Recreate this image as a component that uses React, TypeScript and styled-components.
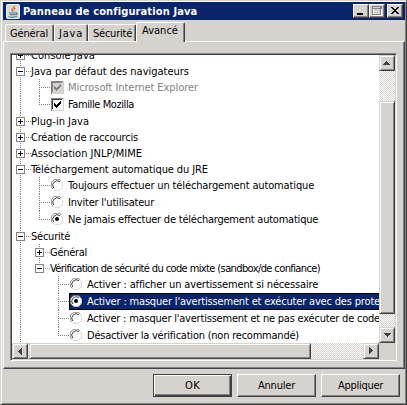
import React, { useLayoutEffect, useRef, useState } from "react";
import styled, { createGlobalStyle, css } from "styled-components";

const face = "#d6d3ce";
const shade = "#848284";
const dark = "#424142";
const navy = "#08246b";

const GlobalStyle = createGlobalStyle`
  * { box-sizing: border-box; }
  body {
    margin: 0;
    background: ${face};
    font-family: "DejaVu Sans Condensed", "DejaVu Sans", sans-serif;
    font-stretch: condensed;
    font-size: 11px;
    line-height: 16px;
    color: #000;
    overflow: hidden;
  }
`;

const raised = css`
  background: ${face};
  border: 1px solid;
  border-color: ${face} ${dark} ${dark} ${face};
  box-shadow: inset 1px 1px #fff, inset -1px -1px ${shade};
`;

const Window = styled.div`
  width: 407px;
  height: 405px;
  display: flex;
  flex-direction: column;
  background: ${face};
  padding: 0 1px 0 2px;
  border: 1px solid;
  border-color: ${face} ${dark} ${dark} ${face};
  box-shadow: inset 1px 1px #fff, inset -1px -1px ${shade};
`;

const TitleBar = styled.header`
  height: 18px;
  margin-top: 1px;
  flex: none;
  display: flex;
  align-items: center;
  padding: 0 2px 0 3px;
  background: ${navy};
  color: #fff;
  font-weight: bold;
`;

const TitleText = styled.div`
  flex: 1;
  padding: 1px 0 0 3px;
`;

const CaptionButton = styled.button<{ $gap?: boolean }>`
  ${raised}
  border-color: #fff ${dark} ${dark} #fff;
  box-shadow: inset -1px -1px ${shade};
  width: 16px;
  height: 14px;
  padding: 0;
  margin-left: ${(p) => (p.$gap ? 2 : 0)}px;
  display: flex;
  svg { display: block; }
`;

const Tabs = styled.nav`
  height: 21px;
  padding-left: 2px;
  flex: none;
  display: flex;
  align-items: flex-end;
`;

const Tab = styled.div<{ $w: number; $active?: boolean }>`
  width: ${(p) => p.$w}px;
  height: ${(p) => (p.$active ? 20 : 17)}px;
  margin-bottom: ${(p) => (p.$active ? -1 : 0)}px;
  padding: ${(p) => (p.$active ? "0 0 0 5px" : "1px 0 0 4px")};
  border: 1px solid #fff;
  border-right-color: ${dark};
  border-bottom: 0;
  border-radius: 2px 2px 0 0;
  box-shadow: inset -1px 0 ${shade};
  background: ${face};
  position: relative;
  z-index: ${(p) => (p.$active ? 1 : 0)};
`;

const Pane = styled.main`
  height: 328px;
  flex: none;
  padding: 11px 6px 6px;
  border: 1px solid;
  border-color: #fff ${dark} ${dark} #fff;
  box-shadow: inset -1px -1px ${shade};
`;

const TreeFrame = styled.div`
  width: 387px;
  height: 308px;
  border: 1px solid;
  border-color: ${shade} #fff #fff ${shade};
  padding: 1px;
  box-shadow: inset 1px 1px ${dark}, inset -1px -1px ${face};
  display: grid;
  grid-template-columns: 367px 16px;
  grid-template-rows: 288px 16px;
`;

const Tree = styled.div`
  overflow: hidden;
  background: #fff;
  display: flex;
  flex-direction: column;
`;

const Row = styled.div<{ $h: number }>`
  height: ${(p) => p.$h}px;
  flex: none;
  display: flex;
  padding-left: 4px;
  &:first-child { margin-top: -8px; }
`;

const dotsX = "repeating-linear-gradient(90deg,#848284 0 1px,transparent 1px 2px)";
const dotsY = "repeating-linear-gradient(180deg,#848284 0 1px,transparent 1px 2px)";

type Guide = "none" | "full" | "end";

const GuideCell = styled.div<{ $guide: Guide; $branch?: boolean }>`
  width: 19px;
  flex: none;
  background-repeat: no-repeat;
  background-image: ${(p) => (p.$guide === "none" ? "none" : dotsY)}, ${(p) => (p.$branch ? dotsX : "none")};
  background-size: 1px ${(p) => (p.$guide === "end" ? "8px" : "100%")}, 11px 1px;
  background-position: 4px 0, 4px 8px;
`;

const NodeCell = styled.div<{ $down?: boolean }>`
  width: 16px;
  flex: none;
  padding-top: 4px;
  background-repeat: no-repeat;
  background-image: ${dotsX}, ${dotsY};
  background-size: 6px 1px, 1px ${(p) => (p.$down ? "100%" : "8px")};
  background-position: 10px 8px, 4px 0;
  svg { display: block; }
`;

const Option = styled.div<{ $selected?: boolean; $disabled?: boolean }>`
  flex: 1;
  min-width: 0;
  display: flex;
  margin-left: -4px;
  color: ${(p) => (p.$selected ? "#fff" : p.$disabled ? shade : "#000")};
  background: ${(p) => (p.$selected ? navy : "transparent")};
  box-shadow: ${(p) => (p.$selected ? "inset 0 1px #000, inset 0 -1px #000, inset 1px 0 #000" : "none")};
`;

const OptionMark = styled.div`
  width: 19px;
  flex: none;
  padding: 2px 0 0 1px;
  svg { display: block; }
`;

const FittedText = styled.span`
  display: inline-block;
  white-space: pre;
  flex: none;
  ${Row} & { margin: 1px 0 -1px -1px; }
`;

const ScrollButton = styled.button`
  ${raised}
  width: 16px;
  height: 16px;
  padding: 0;
  flex: none;
  svg { display: block; }
`;

const ScrollBar = styled.div<{ $vertical?: boolean }>`
  display: flex;
  flex-direction: ${(p) => (p.$vertical ? "column" : "row")};
  background: repeating-conic-gradient(#fff 0 25%, ${face} 0 50%) 0 0 / 2px 2px;
`;

const Thumb = styled.div<{ $before: number; $size: number; $vertical?: boolean }>`
  ${raised}
  flex: none;
  width: ${(p) => (p.$vertical ? 16 : p.$size)}px;
  height: ${(p) => (p.$vertical ? p.$size : 16)}px;
  margin: ${(p) => (p.$vertical ? `${p.$before}px 0 auto` : `0 auto 0 ${p.$before}px`)};
`;

const Corner = styled.div`
  background: ${face};
`;

const Actions = styled.footer`
  display: flex;
  justify-content: flex-end;
  gap: 5px;
  padding: 5px 5px 0 0;
`;

const ActionButton = styled.button<{ $default?: boolean }>`
  width: 79px;
  height: 23px;
  padding: 0;
  display: flex;
  align-items: center;
  justify-content: center;
  font: inherit;
  color: #000;
  background: ${face};
  border: 1px solid;
  border-color: ${(p) => (p.$default ? dark : `#fff ${dark} ${dark} #fff`)};
  box-shadow: ${(p) =>
    p.$default
      ? `inset 1px 1px #fff, inset -1px -1px ${dark}, inset -2px -2px ${shade}`
      : `inset -1px -1px ${shade}`};
`;

/** Spreads the letters of a label so that it occupies the given width. */
function Text({ children, width }: { children: string; width: number }) {
  const ref = useRef<HTMLSpanElement>(null);
  const [spacing, setSpacing] = useState(0);
  useLayoutEffect(() => {
    if (ref.current) {
      const natural = ref.current.getBoundingClientRect().width - spacing * children.length;
      setSpacing((width - natural) / children.length);
    }
  }, [children, width]);
  return (
    <FittedText ref={ref} style={{ letterSpacing: spacing }}>
      {children}
    </FittedText>
  );
}

function Expander({ open }: { open?: boolean }) {
  return (
    <svg width="9" height="9" shapeRendering="crispEdges">
      <rect x=".5" y=".5" width="8" height="8" fill="#fff" stroke={shade} />
      <path d={open ? "M2 4.5h5" : "M2 4.5h5M4.5 2v5"} stroke="#000" />
    </svg>
  );
}

function Radio({ on }: { on?: boolean }) {
  return (
    <svg width="12" height="12" viewBox="0 0 12 12">
      <circle cx="6" cy="6" r="5.5" fill="#fff" />
      <path d="M1.8 10.2A5.5 5.5 0 0 1 10.2 1.8" fill="none" stroke={shade} />
      <path d="M2.7 9A4.5 4.5 0 0 1 9 2.7" fill="none" stroke={dark} />
      <path d="M10.2 2.4A5.3 5.3 0 0 1 2.4 10.2" fill="none" stroke={face} />
      {on && <circle cx="6" cy="6" r="2" fill="#000" />}
    </svg>
  );
}

function Check({ disabled }: { disabled?: boolean }) {
  return (
    <svg width="13" height="13" shapeRendering="crispEdges">
      <rect width="13" height="13" fill={face} />
      <path d="M0 12.5V.5H12" fill="none" stroke={shade} />
      <rect x="1" y="1" width="11" height="11" fill={disabled ? face : "#fff"} />
      <path d="M1.5 11V1.5H11" fill="none" stroke={disabled ? shade : dark} />
      <path d="M3 5v3l2 2 5-5V2L5 7Z" fill={disabled ? shade : "#000"} />
    </svg>
  );
}

function Arrow({ angle }: { angle: number }) {
  return (
    <svg width="14" height="14" viewBox="0 0 14 14" shapeRendering="crispEdges">
      <path transform={`rotate(${angle} 7 7)`} d="M6 5h1v1h1v1h1v1h1v1H3V8h1V7h1V6h1Z" fill={dark} />
    </svg>
  );
}

function JavaLogo() {
  return (
    <svg width="14" height="15" viewBox="0 0 14 15">
      <rect x=".5" y=".5" width="13" height="14" rx="1" fill="#d3dce3" stroke="#f4f7fa" />
      <path d="M8.500 1.500C9 4 5 4.300 6 6.300C6.400 7 7 7.200 6.800 8M9.500 4C7.500 5 7.800 5.800 8.300 6.500" fill="none" stroke="#e7702c" strokeWidth="1.300" />
      <path d="M3 9h6.500M3.800 10.800h5.500M2.500 12.700C5 13.500 9 13.400 11 12.300M9.500 9c2.200-.5 2 1.500 0 1.800" fill="none" stroke="#4b7695" strokeWidth="1.100" />
    </svg>
  );
}

type Item = {
  label: string;
  width: number;
  level: number;
  kind: "open" | "closed" | "radio" | "check";
  on?: boolean;
  disabled?: boolean;
  selected?: boolean;
  last?: boolean;
};

const items: Item[] = [
  { label: "Console Java", width: 64, level: 0, kind: "closed" },
  { label: "Java par défaut des navigateurs", width: 158, level: 0, kind: "open" },
  { label: "Microsoft Internet Explorer", width: 130, level: 1, kind: "check", disabled: true },
  { label: "Famille Mozilla", width: 66, level: 1, kind: "check", last: true },
  { label: "Plug-in Java", width: 58, level: 0, kind: "closed" },
  { label: "Création de raccourcis", width: 107, level: 0, kind: "closed" },
  { label: "Association JNLP/MIME", width: 111, level: 0, kind: "closed" },
  { label: "Téléchargement automatique du JRE", width: 177, level: 0, kind: "open" },
  { label: "Toujours effectuer un téléchargement automatique", width: 246, level: 1, kind: "radio" },
  { label: "Inviter l'utilisateur", width: 86, level: 1, kind: "radio" },
  { label: "Ne jamais effectuer de téléchargement automatique", width: 250, level: 1, kind: "radio", on: true, last: true },
  { label: "Sécurité", width: 39, level: 0, kind: "open" },
  { label: "Général", width: 37, level: 1, kind: "closed" },
  { label: "Vérification de sécurité du code mixte (sandbox/de confiance)", width: 270, level: 1, kind: "open", last: true },
  { label: "Activer : afficher un avertissement si nécessaire", width: 231, level: 2, kind: "radio" },
  { label: "Activer : masquer l'avertissement et exécuter avec des prote", width: 293, level: 2, kind: "radio", on: true, selected: true },
  { label: "Activer : masquer l'avertissement et ne pas exécuter de code", width: 293, level: 2, kind: "radio" },
  { label: "Désactiver la vérification (non recommandé)", width: 212, level: 2, kind: "radio", last: true },
];

function TreeRow({ item }: { item: Item }) {
  const branch = item.kind === "open" || item.kind === "closed";
  const guides: Guide[] = [];
  for (let i = 0; i < item.level; i++) guides.push(i === 1 ? "none" : "full");
  if (!branch) guides.push(item.last ? "end" : "full");
  return (
    <Row $h={branch ? 16 : 17}>
      {guides.map((g, i) => (
        <GuideCell key={i} $guide={g} $branch={!branch && i === guides.length - 1} />
      ))}
      {branch ? (
        <>
          <NodeCell $down={!item.last}>
            <Expander open={item.kind === "open"} />
          </NodeCell>
          <Text width={item.width}>{item.label}</Text>
        </>
      ) : (
        <Option $selected={item.selected} $disabled={item.disabled}>
          <OptionMark>{item.kind === "radio" ? <Radio on={item.on} /> : <Check disabled={item.disabled} />}</OptionMark>
          <Text width={item.width}>{item.label}</Text>
        </Option>
      )}
    </Row>
  );
}

export default function App() {
  return (
    <>
      <GlobalStyle />
      <Window>
        <TitleBar>
          <JavaLogo />
          <TitleText>
            <Text width={174}>Panneau de configuration Java</Text>
          </TitleText>
          <CaptionButton aria-label="Réduire">
            <svg width="14" height="12" shapeRendering="crispEdges"><path d="M3 8h6v2H3z" /></svg>
          </CaptionButton>
          <CaptionButton aria-label="Agrandir">
            <svg width="14" height="12" shapeRendering="crispEdges">
              <path d="M3.500 3v7.500H12M11.500 10V3" fill="none" stroke="#fff" />
              <path d="M2 1h9v2H2zM2.500 2v7.500h8V2" fill="none" stroke={shade} />
            </svg>
          </CaptionButton>
          <CaptionButton $gap aria-label="Fermer">
            <svg width="14" height="12" shapeRendering="crispEdges">
              <path d="M3 2h2v1h1v1h2V3h1V2h2v1h-1v1H9v1H8v1h1v1h1v1h1v1H9V8H8V7H6v1H5v1H3V8h1V7h1V6h1V5H5V4H4V3H3z" />
            </svg>
          </CaptionButton>
        </TitleBar>
        <Tabs>
          <Tab $w={49}><Text width={38}>Général</Text></Tab>
          <Tab $w={34}><Text width={24}>Java</Text></Tab>
          <Tab $w={48}><Text width={39}>Sécurité</Text></Tab>
          <Tab $w={49} $active><Text width={36}>Avancé</Text></Tab>
        </Tabs>
        <Pane>
          <TreeFrame>
            <Tree>
              {items.map((item) => (
                <TreeRow key={item.label} item={item} />
              ))}
            </Tree>
            <ScrollBar $vertical>
              <ScrollButton aria-label="Haut"><Arrow angle={0} /></ScrollButton>
              <Thumb $vertical $before={30} $size={213} />
              <ScrollButton aria-label="Bas"><Arrow angle={180} /></ScrollButton>
            </ScrollBar>
            <ScrollBar>
              <ScrollButton aria-label="Gauche"><Arrow angle={-90} /></ScrollButton>
              <Thumb $before={1} $size={282} />
              <ScrollButton aria-label="Droite"><Arrow angle={90} /></ScrollButton>
            </ScrollBar>
            <Corner />
          </TreeFrame>
        </Pane>
        <Actions>
          <ActionButton $default><Text width={15}>OK</Text></ActionButton>
          <ActionButton><Text width={37}>Annuler</Text></ActionButton>
          <ActionButton><Text width={45}>Appliquer</Text></ActionButton>
        </Actions>
      </Window>
    </>
  );
}
